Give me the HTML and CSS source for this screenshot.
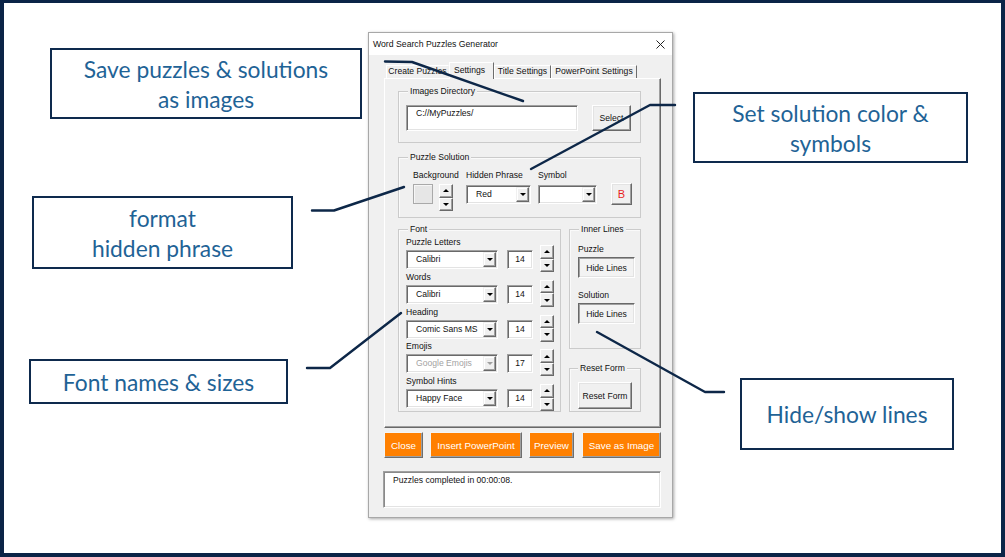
FILE: index.html
```html
<!DOCTYPE html>
<html>
<head>
<meta charset="utf-8">
<title>Word Search Puzzles Generator</title>
<link rel="stylesheet" href="styles.css">
</head>
<body>
<div class="stage">
  <div class="window">
    <div class="titlebar">
      <span class="title">Word Search Puzzles Generator</span>
      <svg class="close" width="9" height="9" viewBox="0 0 9 9"><path d="M0.5 0.5L8.5 8.5M8.5 0.5L0.5 8.5" stroke="#222" stroke-width="1"/></svg>
    </div>
    <div class="body">
      <div class="tabs">
        <div class="tab t1">Create Puzzles</div>
        <div class="tab t2 active">Settings</div>
        <div class="tab t3">Title Settings</div>
        <div class="tab t4">PowerPoint Settings</div>
      </div>
      <div class="page">
        <div class="frame dir">
          <div class="legend">Images Directory</div>
          <div class="dir-row">
            <div class="textbox path">C://MyPuzzles/</div>
            <div class="btn select">Select</div>
          </div>
        </div>

        <div class="frame solution">
          <div class="legend">Puzzle Solution</div>
          <div class="sol-row">
            <div class="col bg-col">
              <div class="lbl">Background</div>
              <div class="bg-ctrl">
                <div class="swatch"></div>
                <div class="spin"><span class="spin-btn"><i class="up"></i></span><span class="spin-btn"><i class="down"></i></span></div>
              </div>
            </div>
            <div class="col hp-col">
              <div class="lbl">Hidden Phrase</div>
              <div class="combo hp"><span class="val">Red</span><span class="drop"><i class="down"></i></span></div>
            </div>
            <div class="col sym-col">
              <div class="lbl">Symbol</div>
              <div class="combo sym"><span class="val"></span><span class="drop"><i class="down"></i></span></div>
            </div>
            <div class="btn bold-btn">B</div>
          </div>
        </div>

        <div class="lower">
          <div class="frame font">
            <div class="legend">Font</div>
            <div class="groups">
              <div class="group">
                <div class="lbl">Puzzle Letters</div>
                <div class="combo fc"><span class="val">Calibri</span><span class="drop"><i class="down"></i></span></div>
                <div class="textbox size">14</div>
                <div class="spin"><span class="spin-btn"><i class="up"></i></span><span class="spin-btn"><i class="down"></i></span></div>
              </div>
              <div class="group">
                <div class="lbl">Words</div>
                <div class="combo fc"><span class="val">Calibri</span><span class="drop"><i class="down"></i></span></div>
                <div class="textbox size">14</div>
                <div class="spin"><span class="spin-btn"><i class="up"></i></span><span class="spin-btn"><i class="down"></i></span></div>
              </div>
              <div class="group">
                <div class="lbl">Heading</div>
                <div class="combo fc"><span class="val">Comic Sans MS</span><span class="drop"><i class="down"></i></span></div>
                <div class="textbox size">14</div>
                <div class="spin"><span class="spin-btn"><i class="up"></i></span><span class="spin-btn"><i class="down"></i></span></div>
              </div>
              <div class="group">
                <div class="lbl">Emojis</div>
                <div class="combo fc disabled"><span class="val">Google Emojis</span><span class="drop"><i class="down"></i></span></div>
                <div class="textbox size">17</div>
                <div class="spin"><span class="spin-btn"><i class="up"></i></span><span class="spin-btn"><i class="down"></i></span></div>
              </div>
              <div class="group">
                <div class="lbl">Symbol Hints</div>
                <div class="combo fc"><span class="val">Happy Face</span><span class="drop"><i class="down"></i></span></div>
                <div class="textbox size">14</div>
                <div class="spin"><span class="spin-btn"><i class="up"></i></span><span class="spin-btn"><i class="down"></i></span></div>
              </div>
            </div>
          </div>
          <div class="right-col">
            <div class="frame inner">
              <div class="legend">Inner Lines</div>
              <div class="lbl first">Puzzle</div>
              <div class="toggle">Hide Lines</div>
              <div class="lbl second">Solution</div>
              <div class="toggle">Hide Lines</div>
            </div>
            <div class="frame reset">
              <div class="legend">Reset Form</div>
              <div class="btn reset-btn">Reset Form</div>
            </div>
          </div>
        </div>
      </div>

      <div class="actions">
        <div class="obtn b-close">Close</div>
        <div class="obtn b-insert">Insert PowerPoint</div>
        <div class="obtn b-preview">Preview</div>
        <div class="obtn b-save">Save as Image</div>
      </div>
      <div class="status">Puzzles completed in 00:00:08.</div>
    </div>
  </div>

  <div class="callout c1">Save puzzles &amp; solutions<br>as images</div>
  <div class="callout c2">Set solution color &amp;<br>symbols</div>
  <div class="callout c3">format<br>hidden phrase</div>
  <div class="callout c4">Font names &amp; sizes</div>
  <div class="callout c5">Hide/show lines</div>

  <svg class="leaders" width="1005" height="557" viewBox="0 0 1005 557">
    <polyline points="385,61.5 412,62 523,101"/>
    <polyline points="675,105 650,105 531,169"/>
    <polyline points="312,210.5 334,210.5 404,187"/>
    <polyline points="307,368 330,368 401,313"/>
    <polyline points="597,332 705,392 724,392"/>
  </svg>
</div>
</body>
</html>
```

FILE: styles.css
```css
html, body {
  margin: 0;
  padding: 0;
  background: #fff;
}

.stage {
  position: relative;
  width: 1005px;
  height: 557px;
  overflow: hidden;
  background: #fff;
  font-family: "Liberation Sans", Arial, sans-serif;
}

.stage::before {
  content: "";
  position: absolute;
  inset: 0;
  border-style: solid;
  border-color: #0b2447;
  border-width: 3px 4px 4px 4px;
  pointer-events: none;
  z-index: 5;
}

/* ---------- dialog window ---------- */
.window {
  position: absolute;
  left: 368px;
  top: 32px;
  width: 305px;
  height: 486px;
  box-sizing: border-box;
  border: 1px solid #a8a8a8;
  background: #f0f0f0;
  box-shadow: 1px 1px 3px rgba(0, 0, 0, 0.35);
  font-size: 8.6px;
  color: #000;
}

.titlebar {
  height: 22px;
  background: #fff;
  display: flex;
  align-items: center;
  justify-content: space-between;
  padding: 0 7px 0 4px;
}

.title {
  font-size: 8.7px;
  color: #111;
}

.close {
  display: block;
}

.body {
  padding: 7px 11px 0 15px;
}

/* tabs */
.tabs {
  display: flex;
  align-items: flex-end;
  height: 16px;
  padding-left: 2px;
}

.tab {
  box-sizing: border-box;
  height: 13px;
  line-height: 11px;
  text-align: center;
  border-top: 1px solid #fff;
  border-left: 1px solid #fff;
  border-right: 1px solid #6d6d6d;
  color: #111;
  white-space: nowrap;
}

.t1 { width: 63px; border-right-color: transparent; }
.t2 { width: 45px; }
.t3 { width: 57px; }
.t4 { width: 86px; }

.tab.active {
  position: relative;
  z-index: 1;
  height: 17px;
  line-height: 14px;
  margin-bottom: -1px;
  padding-right: 4px;
  background: #f0f0f0;
}

.page {
  height: 350px;
  box-sizing: border-box;
  border-top: 1px solid #fff;
  border-left: 1px solid #fff;
  border-right: 1px solid #696969;
  border-bottom: 1px solid #696969;
  box-shadow: inset -1px -1px 0 #a0a0a0;
  padding: 12px 19px 0 13px;
}

/* frames */
.frame {
  border: 1px solid #cbcbcb;
  box-shadow: inset 1px 1px 0 #fafafa;
}

.legend {
  width: max-content;
  height: 10px;
  line-height: 10px;
  margin: -6px 0 0 9px;
  padding: 0 2px;
  background: #f0f0f0;
  color: #111;
}

.lbl {
  line-height: 11px;
  height: 11px;
  color: #111;
  white-space: nowrap;
}

/* 3D controls */
.btn {
  box-sizing: border-box;
  display: flex;
  align-items: center;
  justify-content: center;
  background: #f0f0f0;
  border: 1px solid;
  border-color: #fff #696969 #696969 #fff;
  box-shadow: inset -1px -1px 0 #a0a0a0, inset 1px 1px 0 #e3e3e3;
  color: #111;
}

.textbox {
  box-sizing: border-box;
  background: #fff;
  border: 1px solid;
  border-color: #a0a0a0 #fff #fff #a0a0a0;
  box-shadow: inset 1px 1px 0 #696969, inset -1px -1px 0 #e3e3e3;
  color: #111;
}

.combo {
  box-sizing: border-box;
  display: flex;
  height: 19px;
  background: #fff;
  border: 1px solid;
  border-color: #a0a0a0 #fff #fff #a0a0a0;
  box-shadow: inset 1px 1px 0 #696969, inset -1px -1px 0 #e3e3e3;
  padding: 1px;
}

.combo .val {
  flex: 1;
  line-height: 15px;
  padding-left: 8px;
  white-space: nowrap;
  overflow: hidden;
  color: #111;
}

.combo .drop {
  box-sizing: border-box;
  width: 13px;
  display: flex;
  align-items: center;
  justify-content: center;
  background: #f0f0f0;
  border: 1px solid;
  border-color: #f0f0f0 #696969 #696969 #f0f0f0;
  box-shadow: inset -1px -1px 0 #a0a0a0, inset 1px 1px 0 #fff;
}

.combo.disabled .val { color: #a3a3a3; }
.combo.disabled .down { border-top-color: #a0a0a0; }

i.down, i.up {
  display: block;
  width: 0;
  height: 0;
  border-left: 3px solid transparent;
  border-right: 3px solid transparent;
}

i.down { border-top: 3px solid #000; }
i.up { border-bottom: 3px solid #000; }

.spin {
  display: flex;
  flex-direction: column;
  width: 14px;
  height: 27px;
}

.spin-btn {
  box-sizing: border-box;
  flex: 1;
  display: flex;
  align-items: center;
  justify-content: center;
  background: #f0f0f0;
  border: 1px solid;
  border-color: #fff #696969 #696969 #fff;
  box-shadow: inset -1px -1px 0 #a0a0a0;
}

/* images directory */
.dir-row {
  display: flex;
  justify-content: space-between;
  margin: 9px 9px 11px 7px;
}

.path {
  width: 172px;
  height: 26px;
  padding: 2px 9px;
  line-height: 11px;
}

.select {
  width: 39px;
  height: 26px;
}

/* puzzle solution */
.solution { margin-top: 14px; }

.sol-row {
  display: flex;
  align-items: flex-start;
  margin: 8px 0 6px 14px;
}

.bg-col { width: 53px; }
.hp-col { width: 72px; }
.sym-col { width: 73px; }

.bg-ctrl {
  display: flex;
  margin-top: 3px;
}

.swatch {
  box-sizing: border-box;
  width: 20px;
  height: 20px;
  background: #e6e6e6;
  border: 1px solid #a9a9a9;
  box-shadow: inset 1px 1px 0 #f6f6f6;
}

.bg-ctrl .spin { margin-left: 6px; }

.combo.hp { width: 65px; margin-top: 4px; }
.combo.sym { width: 59px; margin-top: 4px; }

.bold-btn {
  width: 21px;
  height: 22px;
  margin-top: 13px;
  color: #e81d1d;
  font-size: 11px;
}

/* lower area */
.lower {
  display: flex;
  align-items: flex-start;
  margin-top: 11px;
}

.font {
  width: 163px;
  box-sizing: border-box;
}

.groups {
  display: flex;
  flex-direction: column;
  gap: 2.75px;
  padding: 3px 0 3px 7px;
}

.group {
  display: grid;
  grid-template-columns: 92px 9px 26px 7px 14px;
  grid-template-rows: 13px 19px;
  height: 32px;
}

.group .lbl { grid-column: 1 / 4; grid-row: 1; }
.group .combo { grid-column: 1; grid-row: 2; }
.group .size {
  grid-column: 3;
  grid-row: 2;
  height: 19px;
  line-height: 17px;
  text-align: center;
}
.group .spin {
  grid-column: 5;
  grid-row: 1 / 3;
  margin-top: 8px;
}

.right-col {
  width: 72px;
  margin-left: 8px;
}

.inner {
  box-sizing: border-box;
  height: 120px;
  padding-left: 8px;
}

.inner .legend { margin-left: 1px; }
.reset .legend { margin-left: 0px; }

.inner .lbl.first { margin-top: 10px; }
.inner .lbl.second { margin-top: 12px; }

.toggle {
  box-sizing: border-box;
  width: 57px;
  height: 21px;
  margin-top: 2px;
  display: flex;
  align-items: center;
  justify-content: center;
  background: #f3f3f3;
  border: 1px solid;
  border-color: #696969 #fff #fff #696969;
  box-shadow: inset 1px 1px 0 #a0a0a0, inset -1px -1px 0 #e3e3e3;
  color: #111;
}

.reset {
  margin-top: 19px;
  padding: 0 0 2px 8px;
}

.reset-btn {
  width: 54px;
  height: 27px;
  margin-top: 9px;
}

/* action buttons */
.actions {
  display: flex;
  margin-top: 4px;
}

.obtn {
  box-sizing: border-box;
  height: 26px;
  display: flex;
  align-items: center;
  justify-content: center;
  background: #ff8000;
  color: #fff;
  font-size: 9.8px;
  border: 1px solid;
  border-color: #f4f4f4 #6e6e6e #6e6e6e #f4f4f4;
  box-shadow: inset -1px -1px 0 #a0a0a0;
  white-space: nowrap;
}

.b-close { width: 39px; }
.b-insert { width: 92px; margin-left: 7px; }
.b-preview { width: 45px; margin-left: 7px; }
.b-save { width: 79px; margin-left: 8px; }

.status {
  box-sizing: border-box;
  width: 278px;
  height: 37px;
  margin: 13px 0 0 -1px;
  background: #fff;
  border: 1px solid;
  border-color: #a0a0a0 #fff #fff #a0a0a0;
  box-shadow: inset 1px 1px 0 #8a8a8a, inset -1px -1px 0 #e3e3e3;
  padding: 3px 9px;
  line-height: 11px;
  color: #111;
}

/* callouts */
.callout {
  position: absolute;
  box-sizing: border-box;
  display: flex;
  align-items: center;
  justify-content: center;
  text-align: center;
  background: #fff;
  border: 2px solid #0e2a4d;
  font-family: Lato, "Open Sans", sans-serif;
  font-size: 22.8px;
  line-height: 30px;
  color: #1f6396;
}

.c1 { left: 50px; top: 48px; width: 312px; height: 71px; }
.c2 { left: 693px; top: 92px; width: 275px; height: 71px; }
.c3 { left: 32px; top: 196px; width: 261px; height: 73px; }
.c4 { left: 29px; top: 359px; width: 259px; height: 45px; }
.c5 { left: 740px; top: 378px; width: 214px; height: 72px; }

.leaders {
  position: absolute;
  left: 0;
  top: 0;
  z-index: 4;
  pointer-events: none;
}

.leaders polyline {
  fill: none;
  stroke: #0d2748;
  stroke-width: 2.4;
  stroke-linejoin: round;
  stroke-linecap: round;
}
```
